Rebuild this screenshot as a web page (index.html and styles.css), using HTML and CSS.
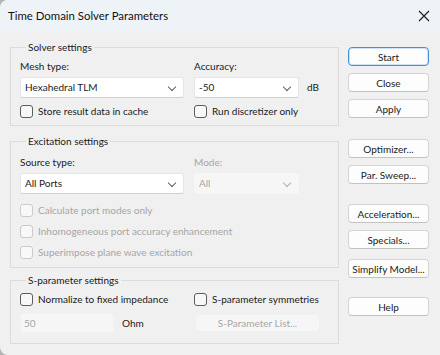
FILE: index.html
```html
<!DOCTYPE html>
<html lang="en">
<head>
  <meta charset="UTF-8" />
  <title>Time Domain Solver Parameters</title>
  <link rel="stylesheet" href="styles.css">
</head>
<body>

<div class="ventana">
  <!-- Barra de titulo -->
  <div class="titulo">
    <span class="titulo-texto">Time Domain Solver Parameters</span>
    <svg class="cerrar" width="12" height="12" viewBox="0 0 12 12">
      <path d="M1 1 L11 11 M11 1 L1 11" stroke="#1b1b1b" stroke-width="1.1" fill="none"/>
    </svg>
  </div>

  <div class="cuerpo">
    <div class="columna">

      <!-- Solver settings -->
      <fieldset class="grupo grupo-solver">
        <legend>Solver settings</legend>
        <div class="fila">
          <div class="campo ancho">
            <label>Mesh type:</label>
            <div class="combo">Hexahedral TLM<span class="flecha"></span></div>
          </div>
          <div class="campo corto">
            <label>Accuracy:</label>
            <div class="combo">-50<span class="flecha"></span></div>
          </div>
          <span class="unidad">dB</span>
        </div>
        <div class="fila checks">
          <label class="check ancho"><span class="caja"></span>Store result data in cache</label>
          <label class="check"><span class="caja"></span>Run discretizer only</label>
        </div>
      </fieldset>

      <!-- Excitation settings -->
      <fieldset class="grupo grupo-excitacion">
        <legend>Excitation settings</legend>
        <div class="fila">
          <div class="campo ancho">
            <label>Source type:</label>
            <div class="combo">All Ports<span class="flecha"></span></div>
          </div>
          <div class="campo corto apagado">
            <label>Mode:</label>
            <div class="combo">All<span class="flecha"></span></div>
          </div>
        </div>
        <div class="lista-checks">
          <label class="check apagado"><span class="caja"></span>Calculate port modes only</label>
          <label class="check apagado"><span class="caja"></span>Inhomogeneous port accuracy enhancement</label>
          <label class="check apagado"><span class="caja"></span>Superimpose plane wave excitation</label>
        </div>
      </fieldset>

      <!-- S-parameter settings -->
      <fieldset class="grupo grupo-sparam">
        <legend>S-parameter settings</legend>
        <div class="fila checks">
          <label class="check ancho"><span class="caja"></span>Normalize to fixed impedance</label>
          <label class="check"><span class="caja"></span>S-parameter symmetries</label>
        </div>
        <div class="fila impedancia">
          <div class="ancho fila impedancia-valor">
            <div class="entrada">50</div>
            <span class="ohm">Ohm</span>
          </div>
          <button class="btn btn-lista" disabled>S-Parameter List...</button>
        </div>
      </fieldset>
    </div>

    <!-- Botones -->
    <div class="botones">
      <button class="btn principal">Start</button>
      <button class="btn">Close</button>
      <button class="btn">Apply</button>
      <button class="btn separado">Optimizer...</button>
      <button class="btn">Par. Sweep...</button>
      <button class="btn separado-grande">Acceleration...</button>
      <button class="btn">Specials...</button>
      <button class="btn separado-simplify">Simplify Model...</button>
      <button class="btn separado-help">Help</button>
    </div>
  </div>
</div>

</body>
</html>
```

FILE: styles.css
```css
* { margin: 0; padding: 0; box-sizing: border-box; }

html, body {
  width: 440px;
  height: 355px;
  overflow: hidden;
  background: #b4b4b4;
}

body {
  font-family: 'Lato', 'Noto Sans', sans-serif;
  font-size: 10px;
  color: #1a1a1a;
}

.ventana {
  width: 440px;
  height: 355px;
  background: #f0f0f0;
  border-radius: 8px 0 0 8px;
  overflow: hidden;
}

.titulo {
  height: 31px;
  background: #eef3f8;
  display: flex;
  align-items: center;
  justify-content: space-between;
  padding: 0 10px 0 8px;
}

.titulo-texto {
  font-size: 11.4px;
  color: #111;
}

.cuerpo {
  display: flex;
  padding: 10px 0 0 10px;
}

.columna {
  width: 329px;
  display: flex;
  flex-direction: column;
}

.grupo {
  border: 1px solid #dcdcdc;
  padding: 0 9px;
  margin: 0;
}

.grupo legend {
  padding: 0 2px;
  margin-left: 6px;
  line-height: 13px;
  color: #1a1a1a;
}

.grupo-solver { height: 85px; padding-top: 5px; }
.grupo-excitacion { height: 133px; margin-top: 9px; padding-top: 7px; }
.grupo-sparam { height: 70px; margin-top: 6px; padding-top: 0; }

.fila {
  display: flex;
  align-items: flex-end;
  white-space: nowrap;
}

.ancho { width: 174px; }
.corto { width: 105px; }

.campo label {
  display: block;
  line-height: 14px;
  margin-bottom: 4px;
}

.combo {
  position: relative;
  height: 21px;
  background: #fff;
  border: 1px solid #e6e6e6;
  border-bottom-color: #cfcfcf;
  border-radius: 3px;
  line-height: 19px;
  padding-left: 4px;
  margin-right: 10px;
}

.corto .combo { margin-right: 0; }

.flecha {
  position: absolute;
  right: 8px;
  top: 6px;
  width: 6px;
  height: 6px;
  border-right: 1px solid #606060;
  border-bottom: 1px solid #606060;
  transform: rotate(45deg);
}

.unidad {
  margin-left: 8px;
  line-height: 21px;
}

.checks { margin-top: 7px; align-items: center; }
.grupo-sparam .checks { margin-top: 6px; }

.check {
  display: flex;
  align-items: center;
  line-height: 13px;
  white-space: nowrap;
}

.caja {
  width: 13px;
  height: 13px;
  border: 1px solid #5d5d5d;
  border-radius: 3px;
  background: #f8f8f8;
  margin-right: 5px;
  flex-shrink: 0;
}

.apagado, .apagado label { color: #a6a6a6; }
.apagado .caja { border-color: #cbcbcb; }
.apagado .combo {
  background: #f6f6f6;
  border-color: #f6f6f6;
  color: #a6a6a6;
}
.apagado .flecha { border-color: #b0b0b0; }

.lista-checks {
  display: flex;
  flex-direction: column;
  gap: 8px;
  margin-top: 10px;
}

.impedancia {
  margin-top: 7px;
  align-items: center;
}

.impedancia-valor { align-items: center; }

.entrada {
  width: 94px;
  height: 20px;
  background: #f6f6f6;
  border: 1px solid #f2f2f2;
  border-radius: 3px;
  color: #a6a6a6;
  line-height: 18px;
  padding-left: 3px;
}

.ohm { margin-left: 8px; }

.botones {
  display: flex;
  flex-direction: column;
  width: 81px;
  margin-left: 9px;
  margin-top: 6px;
  gap: 7px;
}

.btn {
  height: 19px;
  background: #fdfdfd;
  border: 1px solid #d4d4d4;
  border-bottom-color: #c2c2c2;
  border-radius: 4px;
  font-family: inherit;
  font-size: 10px;
  color: #1a1a1a;
  white-space: nowrap;
}

.principal {
  border: 1px solid #4a8fd6;
  box-shadow: inset 0 0 0 1px #cfe1f5;
}

.separado { margin-top: 14px; }
.separado-grande { margin-top: 13px; }
.separado-simplify { margin-top: 3px; }
.separado-help { margin-top: 12px; }

.btn-lista {
  width: 125px;
  height: 18px;
  margin-left: 1px;
  background: #f6f6f6;
  border-color: #f0f0f0;
  color: #a6a6a6;
}
```
